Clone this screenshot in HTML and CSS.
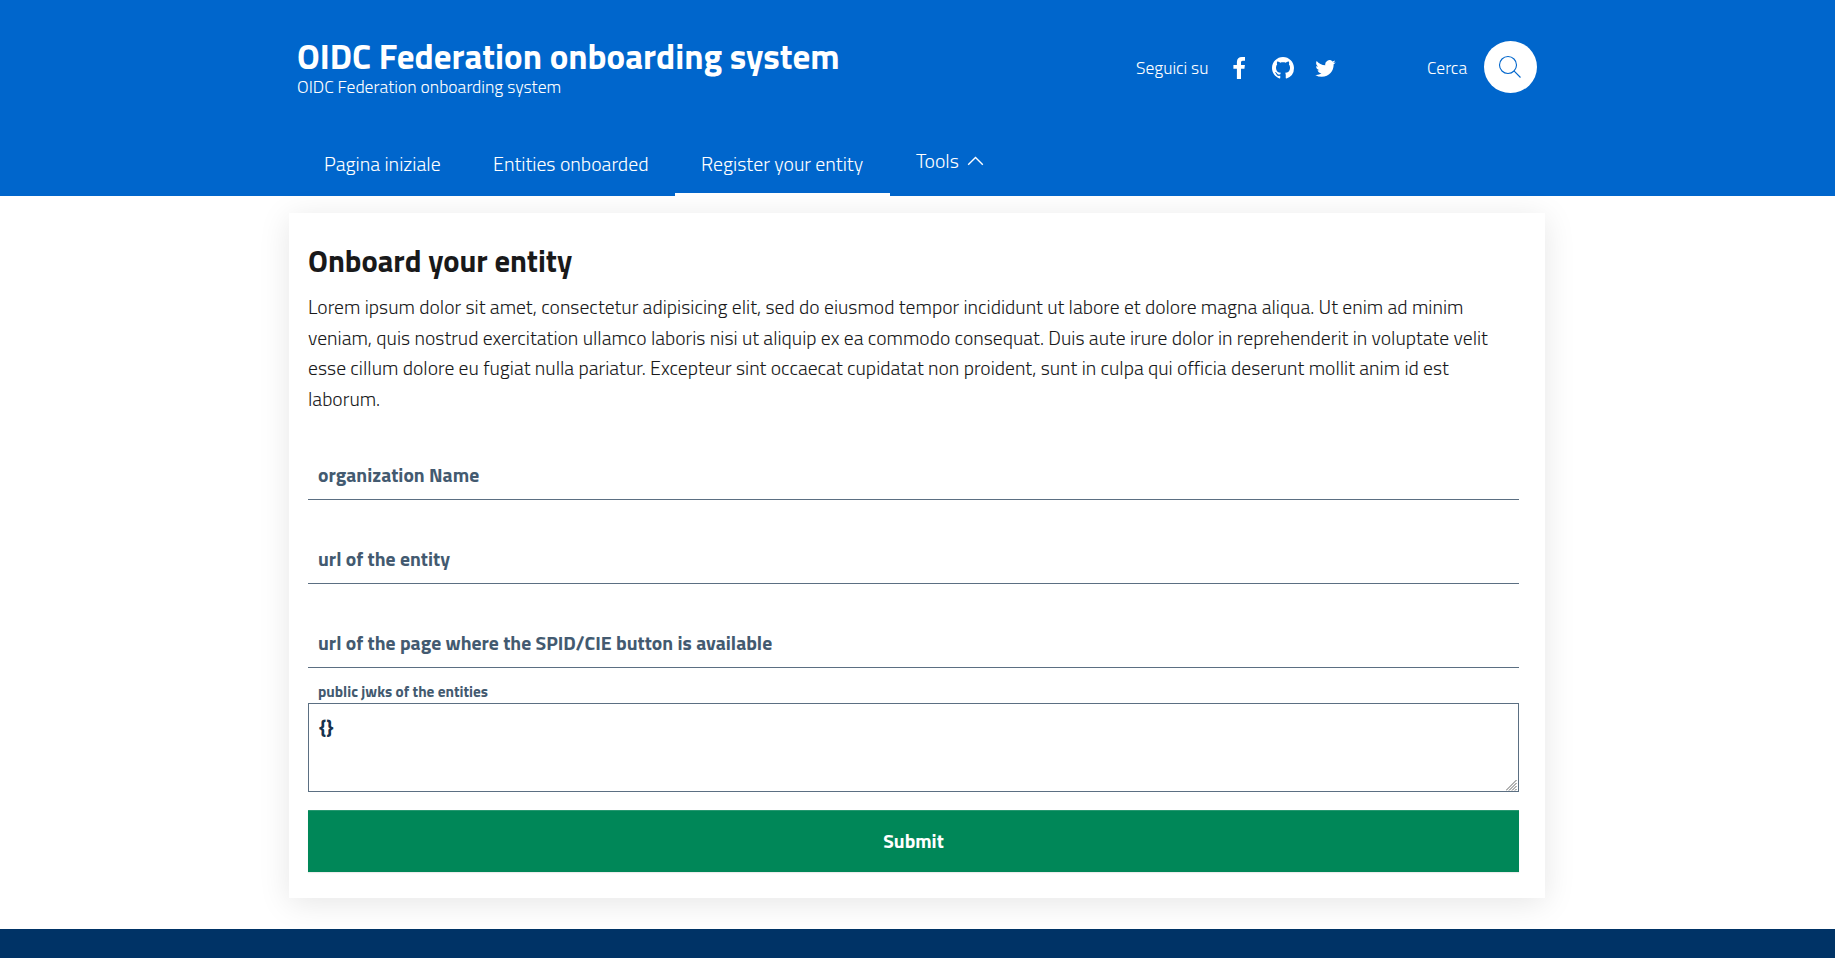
FILE: index.html
```html
<!DOCTYPE html>
<html lang="it">
<head>
<meta charset="utf-8">
<title>OIDC Federation onboarding system</title>
<link rel="stylesheet" href="styles.css">
</head>
<body>
<header class="header">
  <div class="header-top">
    <div class="brand">
      <div class="brand-title">OIDC Federation onboarding system</div>
      <div class="brand-tagline">OIDC Federation onboarding system</div>
    </div>
    <div class="social">
      <span class="label">Seguici su</span>
      <svg class="icon icon-fb" viewBox="0 0 12 22"><path d="M12 .1v3.6H9.9C8.300 3.700 8 4.500 8 5.600v2.300h3.900l-.5 3.800H8V22H3.900V11.700H.4V7.900h3.500V5C3.900 1.700 5.900 0 8.900 0c1.400 0 2.700.1 3.100.1z"/></svg>
      <svg class="icon icon-gh" viewBox="0 0 16 16"><path d="M8 0C3.580 0 0 3.580 0 8c0 3.540 2.290 6.530 5.470 7.590.4.070.55-.17.55-.38 0-.19-.01-.82-.01-1.490-2.010.37-2.530-.49-2.690-.94-.09-.23-.48-.94-.82-1.130-.28-.15-.68-.52-.01-.53.63-.01 1.080.58 1.230.82.72 1.210 1.870.87 2.330.66.070-.52.28-.87.51-1.070-1.780-.2-3.640-.89-3.640-3.950 0-.87.31-1.590.82-2.150-.08-.2-.36-1.020.08-2.120 0 0 .67-.21 2.200.82.64-.18 1.320-.27 2-.27s1.360.09 2 .27c1.530-1.040 2.200-.82 2.200-.82.44 1.100.16 1.920.08 2.120.51.56.82 1.270.82 2.150 0 3.070-1.870 3.750-3.650 3.950.29.25.54.73.54 1.480 0 1.070-.01 1.930-.01 2.200 0 .21.15.46.55.38A8.010 8.010 0 0 0 16 8c0-4.420-3.580-8-8-8z"/></svg>
      <svg class="icon icon-tw" viewBox="0 2 24 20"><path d="M23.950 4.570a10 10 0 0 1-2.820.77 4.960 4.960 0 0 0 2.160-2.720c-.95.55-2 .95-3.130 1.180a4.920 4.920 0 0 0-8.380 4.480C7.690 8.100 4.070 6.130 1.640 3.160a4.820 4.820 0 0 0-.67 2.480c0 1.710.87 3.210 2.190 4.100a4.900 4.900 0 0 1-2.230-.62v.06a4.920 4.920 0 0 0 3.950 4.830 5 5 0 0 1-2.210.08 4.940 4.940 0 0 0 4.600 3.420A9.870 9.870 0 0 1 0 19.540a13.990 13.990 0 0 0 7.560 2.210c9.050 0 14-7.500 14-13.980 0-.21 0-.42-.02-.63a9.940 9.940 0 0 0 2.410-2.570z"/></svg>
    </div>
    <div class="search">
      <span class="label">Cerca</span>
      <a class="search-button" href="#" aria-label="Cerca">
        <svg class="search-icon" viewBox="0 0 24 24"><circle cx="10" cy="10" r="8.500"/><path d="M16.200 16.200l6.300 6.300"/></svg>
      </a>
    </div>
  </div>
  <nav class="nav">
    <a class="nav-link nav-home" href="#">Pagina iniziale</a>
    <a class="nav-link nav-entities" href="#">Entities onboarded</a>
    <a class="nav-link nav-register active" href="#">Register your entity</a>
    <a class="nav-link nav-tools" href="#">Tools<svg class="chevron" viewBox="0 0 16 10"><path d="M.7 8.700L8 1.400l7.300 7.300"/></svg></a>
  </nav>
</header>
<main class="card">
  <h1 class="title">Onboard your entity</h1>
  <p class="intro">Lorem ipsum dolor sit amet, consectetur adipisicing elit, sed do eiusmod tempor incididunt ut labore et dolore magna aliqua. Ut enim ad minim veniam, quis nostrud exercitation ullamco laboris nisi ut aliquip ex ea commodo consequat. Duis aute irure dolor in reprehenderit in voluptate velit esse cillum dolore eu fugiat nulla pariatur. Excepteur sint occaecat cupidatat non proident, sunt in culpa qui officia deserunt mollit anim id est laborum.</p>
  <form class="form">
    <div class="field">organization Name</div>
    <div class="field">url of the entity</div>
    <div class="field">url of the page where the SPID/CIE button is available</div>
    <label class="area-label" for="jwks">public jwks of the entities</label>
    <div class="area-wrap">
      <textarea class="area" id="jwks" spellcheck="false">{}</textarea>
      <svg class="grip" viewBox="0 0 11 11"><path d="M0 10.500L10.500 0M3 10.500L10.500 3M6 10.500L10.500 6M9 10.500L10.500 9"/></svg>
    </div>
    <button class="submit" type="button">Submit</button>
  </form>
</main>
<footer class="footer"></footer>
</body>
</html>
```
FILE: styles.css
```css
* { box-sizing: border-box; }
html { background: #fff; overflow: hidden; }
body {
  margin: 0 1px 0 0;
  height: 958px;
  display: flex;
  flex-direction: column;
  font-family: "Titillium Web", Roboto, sans-serif;
  font-size: 19.8px;
  font-weight: 300;
  color: #19191a;
}
a { color: inherit; text-decoration: none; }

.header {
  height: 196px;
  flex: none;
  padding: 0 297px;
  background: #06c;
  color: #fff;
}
.header-top { display: flex; height: 134px; padding-top: 37px; }
.brand { flex: none; width: 839px; }
.brand-title {
  font-size: 34.95px;
  line-height: 39px;
  font-weight: 700;
}
.brand-tagline {
  font-size: 17.6px;
  line-height: 21px;
}
.social, .search {
  display: flex;
  align-items: center;
  height: 62px;
  font-size: 17.5px;
}
.label { margin-bottom: 1px; line-height: 27px; }
.social { width: 291px; }
.icon { flex: none; fill: #fff; }
.icon-fb { width: 12px; height: 22px; margin-left: 25px; }
.icon-gh { width: 22px; height: 22px; margin-left: 27px; }
.icon-tw { width: 21px; height: 17px; margin-left: 21px; }
.search-button {
  display: flex;
  align-items: center;
  justify-content: center;
  width: 53px;
  height: 52px;
  margin: -2px 0 0 17px;
  padding-right: 2px;
  border-radius: 50%;
  background: #fff;
}
.search-icon {
  width: 24px;
  height: 24px;
  fill: none;
  stroke: #06c;
  stroke-width: 1.1;
}

.nav { display: flex; height: 62px; padding-left: 1px; }
.nav-link {
  flex: none;
  height: 62px;
  padding: 19px 26px 0;
  line-height: 22px;
  border-bottom: 3px solid transparent;
}
.nav-link.active { border-color: #fff; }
.nav-home { width: 169px; }
.nav-entities { width: 208px; }
.nav-register { width: 215px; }
.nav-tools { padding-top: 16px; }
.chevron {
  width: 17px;
  height: 10px;
  margin-left: 8px;
  vertical-align: 2px;
  fill: none;
  stroke: #fff;
  stroke-width: 1.4;
}

.card {
  flex: none;
  width: 1256px;
  height: 685px;
  margin: 17px 0 31px 289px;
  padding: 27px 26px 0 19px;
  box-shadow: 0 5px 30px rgba(0, 0, 0, .1);
}
.title {
  margin: 0;
  font-size: 30.55px;
  line-height: 41px;
  font-weight: 700;
}
.intro {
  height: 123px;
  margin: 11px 0 0;
  font-size: 19.65px;
  line-height: 30.6px;
}
.form {
  display: flex;
  flex-direction: column;
  padding-top: 40px;
}
.field {
  height: 45px;
  margin-bottom: 39px;
  padding: 9px 10px 0;
  border-bottom: 1px solid #5b6f82;
  font-size: 19.65px;
  font-weight: 700;
  line-height: 23px;
  color: #435a70;
}
.area-label {
  margin-top: -24px;
  padding-left: 10px;
  font-size: 15.3px;
  font-weight: 700;
  line-height: 18px;
  color: #435a70;
}
.area-wrap {
  position: relative;
  display: flex;
  height: 89px;
  margin: 2px 0 18px;
}
.area {
  flex: 1;
  padding: 11px 10px;
  border: 1px solid #5b6f82;
  outline: 0;
  font: 700 20px/24px "Titillium Web", Roboto, sans-serif;
  color: #17324d;
  resize: none;
}
.grip {
  position: absolute;
  right: 2px;
  bottom: 1px;
  width: 11px;
  height: 11px;
  fill: none;
  stroke: #666;
  stroke-width: 1;
}
.submit {
  height: 62px;
  padding: 0 0 1px;
  border: 0;
  background: #008758;
  box-shadow: inset 0 1px 0 rgba(255, 255, 255, .15), 0 1px 1px rgba(0, 0, 0, .075);
  font: 700 19.5px/24px "Titillium Web", Roboto, sans-serif;
  color: #fff;
}
.footer { flex: 1; background: #036; }
```
